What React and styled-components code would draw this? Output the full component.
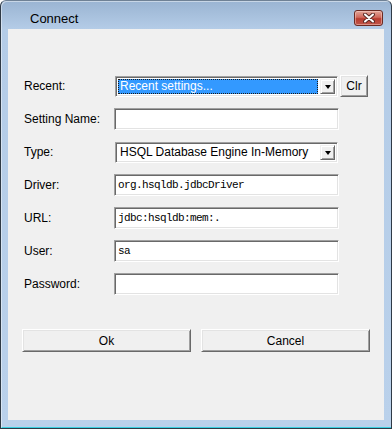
import React from 'react';
import styled, { createGlobalStyle } from 'styled-components';

const GlobalStyle = createGlobalStyle`
  html, body {
    margin: 0;
    padding: 0;
    background: #ffffff;
  }
  * {
    box-sizing: border-box;
  }
`;

const Window = styled.div`
  width: 392px;
  height: 429px;
  display: flex;
  flex-direction: column;
  border: 1px solid #2f3a46;
  border-top-color: #6f8195;
  border-radius: 6px 6px 0 0;
  background: linear-gradient(#9ab4d2 0px, #b4cce7 28px, #bad1eb 100%);
  box-shadow: inset 1px 1px 0 rgba(255, 255, 255, 0.45), inset 0 -1px 0 #3ad0e0;
  font-family: "Liberation Sans", Arial, sans-serif;
  font-size: 12px;
  color: #000;
`;

const TitleBar = styled.div`
  height: 28px;
  flex: none;
  display: flex;
  align-items: center;
  justify-content: space-between;
  padding: 0 8px 0 29px;
`;

const Title = styled.span`
  font-size: 13px;
  color: #000;
  margin-top: 6px;
`;

const CloseBtn = styled.div`
  width: 29px;
  height: 16px;
  margin-top: 6px;
  display: flex;
  align-items: center;
  justify-content: center;
  border: 1px solid #6b2a22;
  border-radius: 3px;
  background: linear-gradient(#e2a699 0%, #d0695c 45%, #b83c2f 55%, #c0564a 100%);
  box-shadow: inset 0 0 0 1px rgba(255, 220, 210, 0.45);
`;

const Client = styled.div`
  flex: none;
  width: 376px;
  height: 391px;
  margin: 0 0 0 7px;
  background: #f0f0f0;
  padding: 46px 14px 0 16px;
  display: flex;
  flex-direction: column;
`;

const Form = styled.div`
  display: flex;
  flex-direction: column;
  gap: 11px;
`;

const Row = styled.div`
  height: 22px;
  display: flex;
  align-items: center;
`;

const Label = styled.span`
  width: ${p => p.$w || 90}px;
  flex: none;
`;

const TextBox = styled.div`
  width: 225px;
  height: 22px;
  flex: none;
  background: #fff;
  border: 1px solid;
  border-color: #a0a0a0 #fff #fff #a0a0a0;
  box-shadow: inset 1px 1px 0 #696969, inset -1px -1px 0 #e3e3e3;
  padding: 0 3px;
  display: flex;
  align-items: center;
  font-family: "Liberation Mono", "DejaVu Sans Mono", monospace;
  font-size: 11px;
  letter-spacing: -0.6px;
`;

const Combo = styled.div`
  width: 223px;
  height: 21px;
  flex: none;
  margin-left: ${p => p.$ml || 0}px;
  background: #fff;
  border: 1px solid;
  border-color: #a0a0a0 #fff #fff #a0a0a0;
  box-shadow: inset 1px 1px 0 #696969, inset -1px -1px 0 #e3e3e3;
  padding: 2px 2px 2px 2px;
  display: flex;
  gap: 2px;
`;

const ComboText = styled.div`
  flex: 1;
  display: flex;
  align-items: center;
  padding-left: 1px;
  white-space: nowrap;
  overflow: hidden;
  background: ${p => (p.$selected ? '#3399ff' : 'transparent')};
  color: ${p => (p.$selected ? '#fff' : '#000')};
  border: 1px ${p => (p.$selected ? 'dotted #1a1a1a' : 'solid transparent')};
`;

const ArrowBtn = styled.div`
  width: 15px;
  flex: none;
  display: flex;
  align-items: center;
  justify-content: center;
  background: #f0f0f0;
  border: 1px solid;
  border-color: #f0f0f0 #696969 #696969 #f0f0f0;
  box-shadow: inset 1px 1px 0 #fff, inset -1px -1px 0 #a0a0a0;
`;

const Arrow = styled.div`
  width: 0;
  height: 0;
  border-left: 3.5px solid transparent;
  border-right: 3.5px solid transparent;
  border-top: 4px solid #000;
  margin-top: 1px;
`;

const Button = styled.button`
  width: ${p => p.$w}px;
  height: ${p => p.$h || 23}px;
  flex: none;
  margin-left: ${p => p.$ml || 0}px;
  padding: 0;
  background: #f0f0f0;
  border: 1px solid;
  border-color: #fff #696969 #696969 #fff;
  box-shadow: inset 1px 1px 0 #e3e3e3, inset -1px -1px 0 #a0a0a0;
  font-family: "Liberation Sans", Arial, sans-serif;
  font-size: 12px;
  color: #000;
  border-radius: 0;
`;

const ButtonBar = styled.div`
  display: flex;
  gap: 10px;
  margin-top: 34px;
  margin-left: -2px;
`;

const fields = [
  { label: 'Setting Name:', value: '' },
  { label: 'Type:', combo: 'HSQL Database Engine In-Memory' },
  { label: 'Driver:', value: 'org.hsqldb.jdbcDriver' },
  { label: 'URL:', value: 'jdbc:hsqldb:mem:.' },
  { label: 'User:', value: 'sa' },
  { label: 'Password:', value: '' },
];

export default function App() {
  return (
    <>
      <GlobalStyle />
      <Window>
        <TitleBar>
          <Title>Connect</Title>
          <CloseBtn>
            <svg width="12" height="10" viewBox="0 0 12 10">
              <path d="M2 1.5 L10 8.5 M10 1.5 L2 8.5" stroke="#5a2a25" strokeWidth="4" strokeLinecap="round" />
              <path d="M2 1.5 L10 8.5 M10 1.5 L2 8.5" stroke="#ffffff" strokeWidth="2" strokeLinecap="round" />
            </svg>
          </CloseBtn>
        </TitleBar>
        <Client>
          <Form>
            <Row>
              <Label>Recent:</Label>
              <Combo $ml={1}>
                <ComboText $selected>Recent settings...</ComboText>
                <ArrowBtn><Arrow /></ArrowBtn>
              </Combo>
              <Button $w={28} $h={22} $ml={2}>Clr</Button>
            </Row>
            {fields.map(f => (
              <Row key={f.label}>
                <Label>{f.label}</Label>
                {f.combo ? (
                  <Combo $ml={1}>
                    <ComboText>{f.combo}</ComboText>
                    <ArrowBtn><Arrow /></ArrowBtn>
                  </Combo>
                ) : (
                  <TextBox>{f.value}</TextBox>
                )}
              </Row>
            ))}
          </Form>
          <ButtonBar>
            <Button $w={169}>Ok</Button>
            <Button $w={169}>Cancel</Button>
          </ButtonBar>
        </Client>
      </Window>
    </>
  );
}
